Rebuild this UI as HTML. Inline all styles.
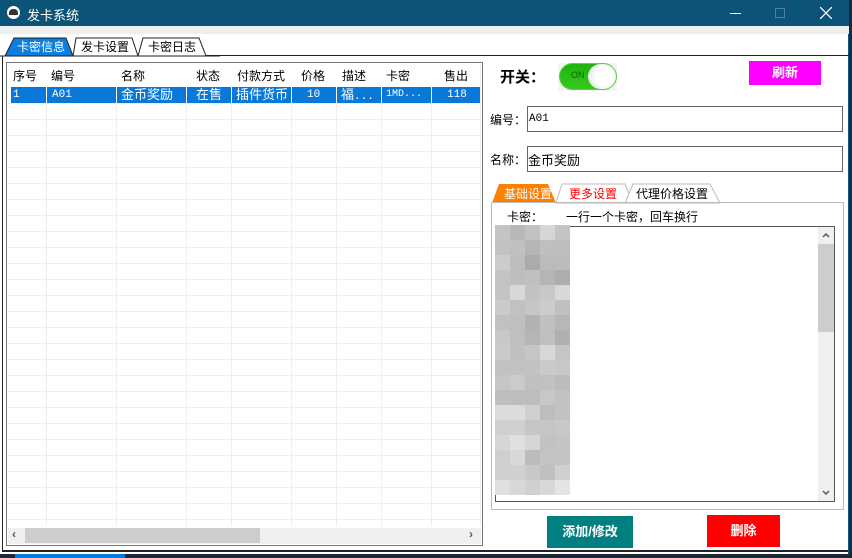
<!DOCTYPE html>
<html><head><meta charset="utf-8"><style>
*{margin:0;padding:0;box-sizing:border-box}
body{width:852px;height:558px;overflow:hidden;background:#1b2a36;font-family:"Liberation Sans","Noto Sans CJK SC",sans-serif;font-size:12px;color:#000;position:relative}
.a{position:absolute}
.win{left:0;top:0;width:849px;height:554px;background:#fff;border-right:1px solid #0a5a8a}
.title{left:0;top:0;width:849px;height:26px;background:#0b5377;color:#fff}
.cell{position:absolute;height:16px;line-height:16px;white-space:nowrap;overflow:hidden;font-size:12px}
.vl{position:absolute;top:64px;width:1px;height:462px;background:#eee}
.hl{position:absolute;left:8px;width:472px;height:1px;background:#eee}
.m{font-family:'Liberation Mono',monospace;font-size:11px}
</style></head><body>
<div class="a win"></div>
<div class="a title">
 <div class="a" style="left:7px;top:6px;width:13px;height:13px;border-radius:50%;background:#fff"></div>
 <div class="a" style="left:9px;top:9px;width:9px;height:6px;border-radius:4px 4px 0 0;background:#333"></div>
 <div class="a" style="left:27px;top:5px;font-size:13px">发卡系统</div>
 <div class="a" style="left:730px;top:13px;width:11px;height:1px;background:#fff"></div>
 <div class="a" style="left:775px;top:8px;width:10px;height:10px;border:1px solid #4f7f9a"></div>
 <svg class="a" style="left:820px;top:7px" width="12" height="12"><path d="M0 0L12 12M12 0L0 12" stroke="#fff" stroke-width="1.3"/></svg>
</div>
<div class="a" style="left:0;top:26px;width:849px;height:8px;background:#eee"></div>
<svg class="a" style="left:0;top:34px" width="220" height="24">
 <polygon points="5,22 14,4 66,4 73,22" fill="#0a7fe0" stroke="#222"/>
 <polygon points="73,22 76,4 132,4 138,22" fill="#fff" stroke="#222"/>
 <polygon points="138,22 143,4 199,4 206,22" fill="#fff" stroke="#222"/>
 <line x1="0" y1="22" x2="220" y2="22" stroke="#222"/>
 <text x="17" y="17" fill="#fff" font-size="12" font-family="Noto Sans CJK SC">卡密信息</text>
 <text x="81" y="17" font-size="12" font-family="Noto Sans CJK SC">发卡设置</text>
 <text x="148" y="17" font-size="12" font-family="Noto Sans CJK SC">卡密日志</text>
</svg>
<div class="a" style="left:206px;top:55px;width:643px;height:1px;background:#222"></div>
<div class="a" style="left:2px;top:56px;width:1px;height:494px;background:#222"></div>
<div class="a" style="left:2px;top:550px;width:846px;height:2px;background:#222"></div>
<div class="a" style="left:6px;top:62px;width:477px;height:484px;border:1px solid #777"></div>
<div class="vl" style="left:46px"></div><div class="vl" style="left:116px"></div><div class="vl" style="left:186px"></div><div class="vl" style="left:231px"></div><div class="vl" style="left:291px"></div><div class="vl" style="left:336px"></div><div class="vl" style="left:381px"></div><div class="vl" style="left:431px"></div><div class="vl" style="left:480px"></div>
<div id="hls"></div>
<div class="a" style="left:8px;top:64px;width:472px;height:23px;background:#fff"></div>
<div class="cell" style="left:13px;top:68px">序号</div>
<div class="cell" style="left:51px;top:68px">编号</div>
<div class="cell" style="left:121px;top:68px">名称</div>
<div class="cell" style="left:196px;top:68px">状态</div>
<div class="cell" style="left:237px;top:68px">付款方式</div>
<div class="cell" style="left:301px;top:68px">价格</div>
<div class="cell" style="left:342px;top:68px">描述</div>
<div class="cell" style="left:386px;top:68px">卡密</div>
<div class="cell" style="left:444px;top:68px">售出</div>
<div class="a" style="left:11px;top:87px;width:469px;height:16px;background:#0a78d7"></div>
<div class="a" style="left:46px;top:87px;width:1px;height:16px;background:#fff"></div><div class="a" style="left:116px;top:87px;width:1px;height:16px;background:#fff"></div><div class="a" style="left:186px;top:87px;width:1px;height:16px;background:#fff"></div><div class="a" style="left:231px;top:87px;width:1px;height:16px;background:#fff"></div><div class="a" style="left:291px;top:87px;width:1px;height:16px;background:#fff"></div><div class="a" style="left:336px;top:87px;width:1px;height:16px;background:#fff"></div><div class="a" style="left:381px;top:87px;width:1px;height:16px;background:#fff"></div><div class="a" style="left:431px;top:87px;width:1px;height:16px;background:#fff"></div>
<div class="cell m" style="left:13px;top:87px;color:#fff">1</div>
<div class="cell m" style="left:52px;top:87px;color:#fff">A01</div>
<div class="cell" style="left:121px;top:87px;color:#fff;font-size:13px">金币奖励</div>
<div class="cell" style="left:196px;top:87px;color:#fff;font-size:13px">在售</div>
<div class="cell" style="left:236px;top:87px;color:#fff;font-size:13px">插件货币</div>
<div class="cell m" style="left:307px;top:87px;color:#fff">10</div>
<div class="cell" style="left:341px;top:87px;color:#fff;font-size:13px">福<span class="m">...</span></div>
<div class="cell m" style="left:386px;top:87px;color:#fff;font-size:10px">1MD...</div>
<div class="cell m" style="left:447px;top:87px;color:#fff">118</div>
<div class="a" style="left:8px;top:528px;width:473px;height:16px;background:#f0f0f0"></div>
<div class="a" style="left:25px;top:528px;width:235px;height:15px;background:#cdcdcd"></div>
<div class="a" style="left:12px;top:527px;color:#555;font-size:12px;font-weight:bold">‹</div>
<div class="a" style="left:469px;top:527px;color:#555;font-size:12px;font-weight:bold">›</div>
<div class="a" style="left:500px;top:66px;font-size:15px;font-weight:bold">开关：</div>
<div class="a" style="left:558px;top:63px;width:59px;height:28px;background:#f4f4f4"></div>
<div class="a" style="left:559px;top:63px;width:58px;height:27px;border-radius:14px;background:linear-gradient(#1fb30f,#36c81e);border:1px solid #5ad23a"></div>
<div class="a" style="left:571px;top:70px;font-size:9px;color:#0a6a06">ON</div>
<div class="a" style="left:588px;top:64px;width:28px;height:25px;border-radius:13px;background:radial-gradient(circle at 60% 50%,#fff 40%,#ddd)"></div>
<div class="a" style="left:749px;top:61px;width:72px;height:24px;background:#f0f;color:#fff;font-weight:bold;font-size:13px;text-align:center;line-height:24px">刷新</div>
<div class="a" style="left:490px;top:111px;font-size:12px">编号：</div>
<div class="a" style="left:527px;top:106px;width:316px;height:26px;border:1px solid #666"></div>
<div class="a m" style="left:529px;top:113px">A01</div>
<div class="a" style="left:490px;top:151px;font-size:12px">名称：</div>
<div class="a" style="left:527px;top:146px;width:316px;height:26px;border:1px solid #666"></div>
<div class="a" style="left:528px;top:150px;font-size:13px">金币奖励</div>
<svg class="a" style="left:490px;top:181px" width="240" height="24">
 <polygon points="2,22 9,3 58,3 66,22" fill="#ff7f00"/>
 <polygon points="66,22 72,3 135,3 143,22" fill="#fff" stroke="#bbb"/>
 <polygon points="135,22 143,3 220,3 230,22" fill="#fff" stroke="#bbb"/>
 <text x="14" y="17" fill="#fff" font-size="12" font-family="Noto Sans CJK SC">基础设置</text>
 <text x="79" y="17" fill="#f00" font-size="12" font-family="Noto Sans CJK SC">更多设置</text>
 <text x="146" y="17" font-size="12" font-family="Noto Sans CJK SC">代理价格设置</text>
</svg>
<div class="a" style="left:491px;top:202px;width:353px;height:308px;border:1px solid #bbb"></div>
<div class="a" style="left:507px;top:208px;font-size:12px">卡密：</div>
<div class="a" style="left:566px;top:208px;font-size:12px">一行一个卡密，回车换行</div>
<div class="a" style="left:495px;top:226px;width:340px;height:276px;border:1px solid #555;background:#fff"></div>
<div class="a" style="left:818px;top:227px;width:16px;height:274px;background:#f0f0f0"></div>
<div class="a" style="left:818px;top:244px;width:16px;height:88px;background:#cdcdcd"></div>
<svg class="a" style="left:822px;top:232px" width="8" height="6"><path d="M1 5L4 2L7 5" stroke="#555" stroke-width="1.5" fill="none"/></svg>
<svg class="a" style="left:822px;top:490px" width="8" height="6"><path d="M1 1L4 4L7 1" stroke="#555" stroke-width="1.5" fill="none"/></svg>
<div id="pix" class="a" style="left:495px;top:222px;width:80px;height:278px"></div>
<div class="a" style="left:547px;top:516px;width:86px;height:32px;background:#008080;color:#fff;font-weight:bold;font-size:13px;text-align:center;line-height:32px">添加/修改</div>
<div class="a" style="left:707px;top:515px;width:73px;height:32px;background:#f00;color:#fff;font-weight:bold;font-size:13px;text-align:center;line-height:32px">删除</div>
<div class="a" style="left:15px;top:554px;width:110px;height:4px;background:#0a78d7"></div>
<script>
var h='';for(var y=103;y<526;y+=16)h+='<div class="hl" style="top:'+y+'px"></div>';
document.getElementById('hls').innerHTML=h;
var g=[0xc4,0xb8,0xc2,0xd6,0xc4,0xc2,0xc0,0xb5,0xbf,0xbe,0xcc,0xbe,0xab,0xbb,0xbc,0xc4,0xbe,0xc0,0xb5,0xad,0xc4,0xd8,0xc2,0xc8,0xd8,0xca,0xc1,0xc6,0xcc,0xc0,0xc1,0xbf,0xb2,0xc0,0xb7,0xc8,0xbf,0xb5,0xbf,0xb0,0xca,0xc0,0xc5,0xd8,0xc5,0xc2,0xc2,0xc2,0xca,0xc8,0xc6,0xcb,0xc0,0xc1,0xbc,0xbe,0xbd,0xbd,0xc7,0xc2,0xdc,0xdc,0xd0,0xbd,0xc2,0xcf,0xd0,0xc5,0xc5,0xc8,0xd6,0xe0,0xd5,0xc2,0xc4,0xcf,0xd8,0xbc,0xc4,0xc4,0xd0,0xd0,0xc8,0xc0,0xd0,0xe0,0xd8,0xd0,0xd8,0xe4];
var p='';for(var r=0;r<18;r++)for(var c=0;c<5;c++){var v=g[(r*5+c)%g.length];p+='<div style="position:absolute;left:'+(c*15)+'px;top:'+(r*15+3)+'px;width:15px;height:15px;background:rgb('+v+','+v+','+v+')"></div>';}
document.getElementById('pix').innerHTML=p;
</script>
</body></html>
